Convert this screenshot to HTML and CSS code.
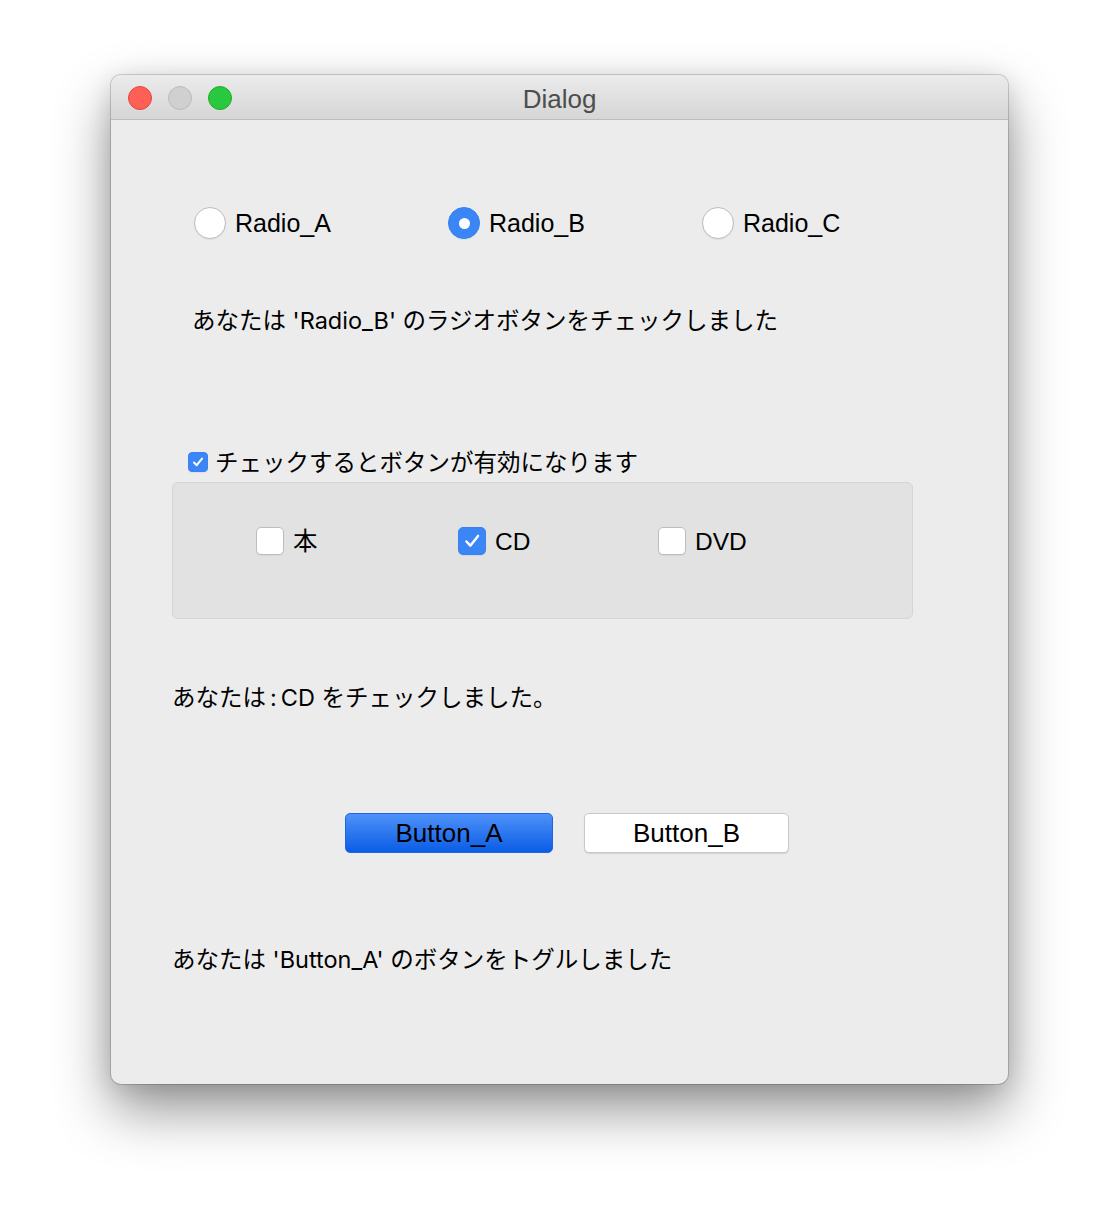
FILE: index.html
```html
<!DOCTYPE html>
<html lang="ja">
<head>
<meta charset="utf-8">
<title>Dialog</title>
<link rel="stylesheet" href="styles.css">
</head>
<body>
<div class="stage">
  <div class="window">
    <div class="titlebar">
      <div class="lights">
        <span class="light red"></span>
        <span class="light gray"></span>
        <span class="light green"></span>
      </div>
      <div class="title">Dialog</div>
      <div></div>
    </div>
    <div class="content">
      <div class="radios">
        <div class="radio-item"><span class="radio"></span><span class="label">Radio_A</span></div>
        <div class="radio-item"><span class="radio on"></span><span class="label">Radio_B</span></div>
        <div class="radio-item"><span class="radio"></span><span class="label">Radio_C</span></div>
      </div>
      <p class="status s1">あなたは 'Radio_B' のラジオボタンをチェックしました</p>
      <div class="group-head">
        <span class="cb small on"><svg viewBox="0 0 20 20"><path d="M5.5 10.5 L8.6 13.6 L14.5 6.2"/></svg></span>
        <span class="label">チェックするとボタンが有効になります</span>
      </div>
      <div class="group">
        <div class="cb-item"><span class="cb"></span><span class="label">本</span></div>
        <div class="cb-item"><span class="cb on"><svg viewBox="0 0 28 28"><path d="M8 14.5 L12.2 19 L20.5 8.5"/></svg></span><span class="label">CD</span></div>
        <div class="cb-item"><span class="cb"></span><span class="label">DVD</span></div>
      </div>
      <p class="status s2">あなたは<span class="colon">:</span>CD をチェックしました。</p>
      <div class="buttons">
        <button class="btn primary">Button_A</button>
        <button class="btn">Button_B</button>
      </div>
      <p class="status s3">あなたは 'Button_A' のボタンをトグルしました</p>
    </div>
  </div>
</div>
</body>
</html>
```
FILE: styles.css
```css
html, body {
  margin: 0;
  padding: 0;
  background: #ffffff;
}
body {
  width: 1120px;
  height: 1232px;
  overflow: hidden;
  font-family: "Liberation Sans", "Noto Sans CJK JP", sans-serif;
  color: #000;
}
.stage {
  padding: 75px 0 0 111px;
}
.window {
  width: 897px;
  height: 1009px;
  box-sizing: border-box;
  background: #ececec;
  border-radius: 10px;
  box-shadow: 0 0 0 1px rgba(0,0,0,0.16), 0 26px 55px rgba(0,0,0,0.42), 0 4px 24px rgba(0,0,0,0.12);
  overflow: hidden;
}
.titlebar {
  height: 44px;
  border-bottom: 1px solid #bcbcbc;
  background: linear-gradient(#ebebeb, #d5d5d5);
  display: grid;
  grid-template-columns: 1fr auto 1fr;
  align-items: center;
}
.lights {
  display: flex;
  gap: 16px;
  padding-left: 17px;
}
.light {
  width: 24px;
  height: 24px;
  box-sizing: border-box;
  border-radius: 50%;
  border: 1px solid;
}
.red { background: #fe5f57; border-color: #e2463f; }
.gray { background: #d0d0d0; border-color: #bcbcbc; }
.green { background: #28c83f; border-color: #1dad2b; }
.title {
  font-size: 26px;
  color: #4d4d4d;
  line-height: 44px;
  padding-top: 2px;
}
.content {
  padding-top: 87px;
}
.label {
  font-size: 24px;
  line-height: 32px;
  white-space: nowrap;
}
.radios {
  display: grid;
  grid-template-columns: 254px 254px auto;
  padding-left: 83px;
  height: 32px;
}
.radio-item {
  display: flex;
  align-items: center;
  gap: 9px;
}
.radio-item .label { font-size: 25px; }
.radio {
  width: 32px;
  height: 32px;
  box-sizing: border-box;
  border-radius: 50%;
  background: #fff;
  border: 1px solid #bdbdbd;
  box-shadow: 0 1px 1px rgba(0,0,0,0.06);
  display: flex;
  align-items: center;
  justify-content: center;
}
.radio.on {
  background: #3b86f7;
  border-color: #3580f0;
}
.radio.on::after {
  content: "";
  width: 11px;
  height: 11px;
  border-radius: 50%;
  background: #fff;
}
.status {
  margin: 0;
  font-family: "Inter", "Noto Sans CJK JP", sans-serif;
  font-size: 23.5px;
  line-height: 32px;
  white-space: nowrap;
}
.colon {
  padding: 0 4px;
}
.s1 { margin-top: 66px; padding-left: 81px; }
.s2 { margin-top: 63px; padding-left: 61px; }
.s3 { margin-top: 91px; padding-left: 61px; }
.group-head {
  margin-top: 109px;
  padding-left: 77px;
  display: flex;
  align-items: center;
  gap: 7px;
  height: 32px;
}
.group-head .label { font-size: 23.5px; position: relative; top: 1px; }
.cb {
  width: 28px;
  height: 28px;
  box-sizing: border-box;
  border-radius: 5px;
  background: #fff;
  border: 1px solid #bdbdbd;
  box-shadow: 0 1px 1px rgba(0,0,0,0.05);
  display: flex;
  align-items: center;
  justify-content: center;
}
.cb.small {
  width: 20px;
  height: 20px;
  border-radius: 4px;
}
.cb.on {
  background: #3b86f7;
  border-color: #3a82f2;
}
.cb svg {
  width: 100%;
  height: 100%;
}
.cb svg path {
  fill: none;
  stroke: #fff;
  stroke-width: 2.6;
  stroke-linecap: round;
  stroke-linejoin: round;
}
.cb.small svg path { stroke-width: 2.2; }
.group {
  margin: 4px 0 0 61px;
  width: 741px;
  height: 137px;
  box-sizing: border-box;
  background: #e2e2e2;
  border: 1px solid #d5d5d5;
  border-radius: 6px;
  padding: 44px 0 0 83px;
  display: grid;
  grid-template-columns: 202px 200px auto;
  align-content: start;
}
.cb-item {
  display: flex;
  align-items: center;
  gap: 9px;
  height: 28px;
}
.cb-item .label { font-size: 24.5px; position: relative; top: 1px; }
.buttons {
  margin-top: 99px;
  padding-left: 234px;
  display: flex;
  gap: 31px;
}
.btn {
  height: 40px;
  box-sizing: border-box;
  font-family: "Liberation Sans", "Noto Sans CJK JP", sans-serif;
  font-size: 26px;
  color: #000;
  border-radius: 5px;
  padding: 0;
  line-height: 38px;
}
.btn.primary {
  width: 208px;
  background: linear-gradient(#4e91f9, #0b5de6);
  border: 1px solid #1f66e0;
}
.btn:not(.primary) {
  width: 205px;
  background: #fff;
  border: 1px solid #c9c9c9;
  box-shadow: 0 1px 1px rgba(0,0,0,0.12);
}
```
